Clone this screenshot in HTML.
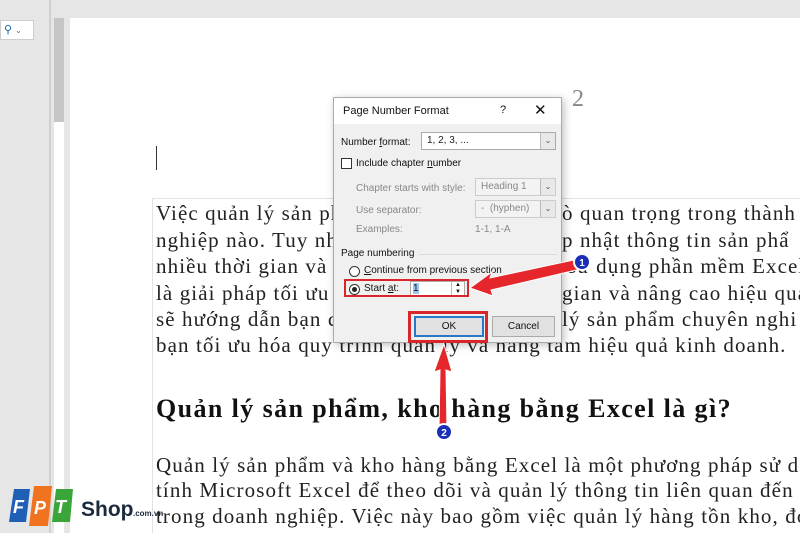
<!DOCTYPE html>
<html><head><meta charset="utf-8"><style>
*{margin:0;padding:0;box-sizing:border-box}
html,body{width:800px;height:533px;overflow:hidden}
body{position:relative;background:#e6e6e6;font-family:"Liberation Sans",sans-serif}
.abs{position:absolute}
.serif{position:absolute;left:0;top:0;width:800px;height:533px;overflow:hidden;font-family:"Liberation Serif","DejaVu Serif",serif;color:#222;white-space:nowrap}
.l{position:absolute;left:156px;font-size:21px;line-height:26px;letter-spacing:1.1px}
.dlg{font-size:10px;color:#111}
.dis{color:#888}
.sel{position:absolute;height:18px;border:1px solid #aaa;background:#fff;font-size:10px;padding:2px 5px;color:#222}
.sel.d{background:#f3f3f3;color:#888;border-color:#ccc}
.dd{position:absolute;right:0;top:0;width:15px;height:16px;border-left:1px solid #bbb;background:#e8e8e8;font-size:8px;text-align:center;line-height:16px;color:#555}
</style></head><body>
<div class="abs" style="left:0;top:20px;width:34px;height:20px;background:#fff;border:1px solid #ccc;font-size:11px;padding:2px 3px;color:#1a5fa8">⚲ <span style="color:#666;font-size:8px">⌄</span></div>
<div class="abs" style="left:49px;top:0;width:2px;height:533px;background:#d0d0d0"></div>
<div class="abs" style="left:54px;top:18px;width:10px;height:515px;background:#fff"></div>
<div class="abs" style="left:54px;top:18px;width:10px;height:104px;background:#c6c6c6"></div>
<div class="abs" style="left:70px;top:18px;width:730px;height:515px;background:#fff"></div>
<div class="abs" style="left:156px;top:146px;width:1px;height:24px;background:#333"></div>
<div class="abs" style="left:572px;top:86px;font-size:24px;color:#888;font-family:'Liberation Serif',serif">2</div>
<div class="abs" style="left:152px;top:198px;width:648px;height:1px;background:#e2e2e2"></div>
<div class="abs" style="left:152px;top:198px;width:1px;height:335px;background:#e2e2e2"></div>
<div class="serif">
<div class="l" style="top:200px">Việc quản lý sản phẩm và</div>
<div class="l" style="top:200px;left:562px">ò quan trọng trong thành c</div>
<div class="l" style="top:227px">nghiệp nào. Tuy nhiên, việc</div>
<div class="l" style="top:227px;left:562px">p nhật thông tin sản phẩ</div>
<div class="l" style="top:253px">nhiều thời gian và công</div>
<div class="l" style="top:253px;left:568px">sử dụng phần mềm Excel</div>
<div class="l" style="top:280px">là giải pháp tối ưu giúp</div>
<div class="l" style="top:280px;left:562px">gian và nâng cao hiệu quả c</div>
<div class="l" style="top:306px">sẽ hướng dẫn bạn cách</div>
<div class="l" style="top:306px;left:562px">lý sản phẩm chuyên nghi</div>
<div class="l" style="top:332px">bạn tối ưu hóa quy trình quản lý và nâng tầm hiệu quả kinh doanh.</div>
<div class="l" style="top:393px;font-size:26px;font-weight:bold;line-height:32px;color:#111;letter-spacing:1.4px">Quản lý sản phẩm, kho hàng bằng Excel là gì?</div>
<div class="l" style="top:452px">Quản lý sản phẩm và kho hàng bằng Excel là một phương pháp sử d</div>
<div class="l" style="top:477px">tính Microsoft Excel để theo dõi và quản lý thông tin liên quan đến s</div>
<div class="l" style="top:503px">trong doanh nghiệp. Việc này bao gồm việc quản lý hàng tồn kho, đơ</div>
</div>
<!-- dialog -->
<div class="abs dlg" style="left:333px;top:97px;width:229px;height:246px;background:#f0f0f0;border:1px solid #aaa;box-shadow:2px 2px 8px rgba(0,0,0,.25)">
<div class="abs" style="left:0;top:0;width:227px;height:26px;background:#fff"></div>
<div class="abs" style="left:9px;top:7px;font-size:11px">Page Number Format</div>
<div class="abs" style="left:166px;top:6px;font-size:11px">?</div>
<div class="abs" style="left:200px;top:3px;font-size:15px">✕</div>
<div class="abs" style="left:7px;top:39px">Number <u>f</u>ormat:</div>
<div class="sel" style="left:87px;top:34px;width:135px">1, 2, 3, ...<div class="dd">⌄</div></div>
<div class="abs" style="left:7px;top:60px;width:11px;height:11px;border:1px solid #333;background:#fff"></div>
<div class="abs" style="left:22px;top:60px">Include chapter <u>n</u>umber</div>
<div class="abs dis" style="left:22px;top:85px">Chapter starts with style:</div>
<div class="sel d" style="left:141px;top:80px;width:81px">Heading 1<div class="dd">⌄</div></div>
<div class="abs dis" style="left:22px;top:107px">Use separator:</div>
<div class="sel d" style="left:141px;top:102px;width:81px">-&nbsp; (hyphen)<div class="dd">⌄</div></div>
<div class="abs dis" style="left:22px;top:126px">Examples:</div>
<div class="abs dis" style="left:141px;top:126px">1-1, 1-A</div>
<div class="abs" style="left:7px;top:150px">Page numbering</div>
<div class="abs" style="left:85px;top:156px;width:138px;height:1px;background:#ddd"></div>
<div class="abs" style="left:15px;top:168px;width:11px;height:11px;border:1px solid #333;border-radius:50%;background:#fff"></div>
<div class="abs" style="left:30px;top:167px"><u>C</u>ontinue from previous section</div>
<div class="abs" style="left:15px;top:186px;width:11px;height:11px;border:1px solid #333;border-radius:50%;background:#fff"><div style="margin:2px;width:5px;height:5px;border-radius:50%;background:#222"></div></div>
<div class="abs" style="left:30px;top:185px">Start <u>a</u>t:</div>
<div class="abs" style="left:76px;top:183px;width:55px;height:16px;background:#fff;border:1px solid #aaa;padding:1px 2px"><span style="background:#9cc8f0">1</span></div>
<div class="abs" style="left:117px;top:184px;width:13px;height:14px;border-left:1px solid #bbb;font-size:6px;line-height:7px;text-align:center">▲<br>▼</div>
<div class="abs" style="left:80px;top:218px;width:70px;height:21px;border:2px solid #2b77c7;background:#e1e1e1;text-align:center;line-height:17px">OK</div>
<div class="abs" style="left:158px;top:218px;width:63px;height:21px;border:1px solid #aaa;background:#e1e1e1;text-align:center;line-height:19px">Cancel</div>
</div>
<!-- red boxes -->
<div class="abs" style="left:344px;top:279px;width:125px;height:18px;border:2px solid #d8262b"></div>
<div class="abs" style="left:408px;top:311px;width:80px;height:32px;border:3px solid #d8262b"></div>
<svg class="abs" style="left:0;top:0" width="800" height="533">
<polygon points="583,258 490,278 492,272 470,288 493,296 491,290 585,268" fill="#e5262b" stroke="#fff" stroke-width="1"/>
<polygon points="439,430 440,370 434,372 444,344 452,372 446,370 447,430" fill="#e5262b" stroke="#fff" stroke-width="1"/>
<circle cx="582" cy="262" r="8" fill="#1a2fb8" stroke="#fff" stroke-width="2"/>
<text x="582" y="266" font-size="10" font-weight="bold" fill="#fff" text-anchor="middle" font-family="Liberation Sans">1</text>
<circle cx="444" cy="432" r="8" fill="#1a2fb8" stroke="#fff" stroke-width="2"/>
<text x="444" y="436" font-size="10" font-weight="bold" fill="#fff" text-anchor="middle" font-family="Liberation Sans">2</text>
<polygon points="14,489 30,489 26,522 9,522" fill="#1f5fb5"/>
<polygon points="34,486 52,486 48,526 29,526" fill="#f0731f"/>
<polygon points="56,489 73,489 70,522 52,522" fill="#3aa538"/>
<text x="13" y="513" font-size="18" font-weight="bold" font-style="italic" fill="#fff" font-family="Liberation Sans">F</text>
<text x="34" y="514" font-size="18" font-weight="bold" font-style="italic" fill="#fff" font-family="Liberation Sans">P</text>
<text x="55" y="513" font-size="18" font-weight="bold" font-style="italic" fill="#fff" font-family="Liberation Sans">T</text>
<text x="81" y="516" font-size="21" font-weight="bold" fill="#1b2a3c" font-family="Liberation Sans">Shop</text>
<text x="133" y="516" font-size="8" font-weight="bold" fill="#1b2a3c" font-family="Liberation Sans">.com.vn</text>
</svg>
</body></html>
